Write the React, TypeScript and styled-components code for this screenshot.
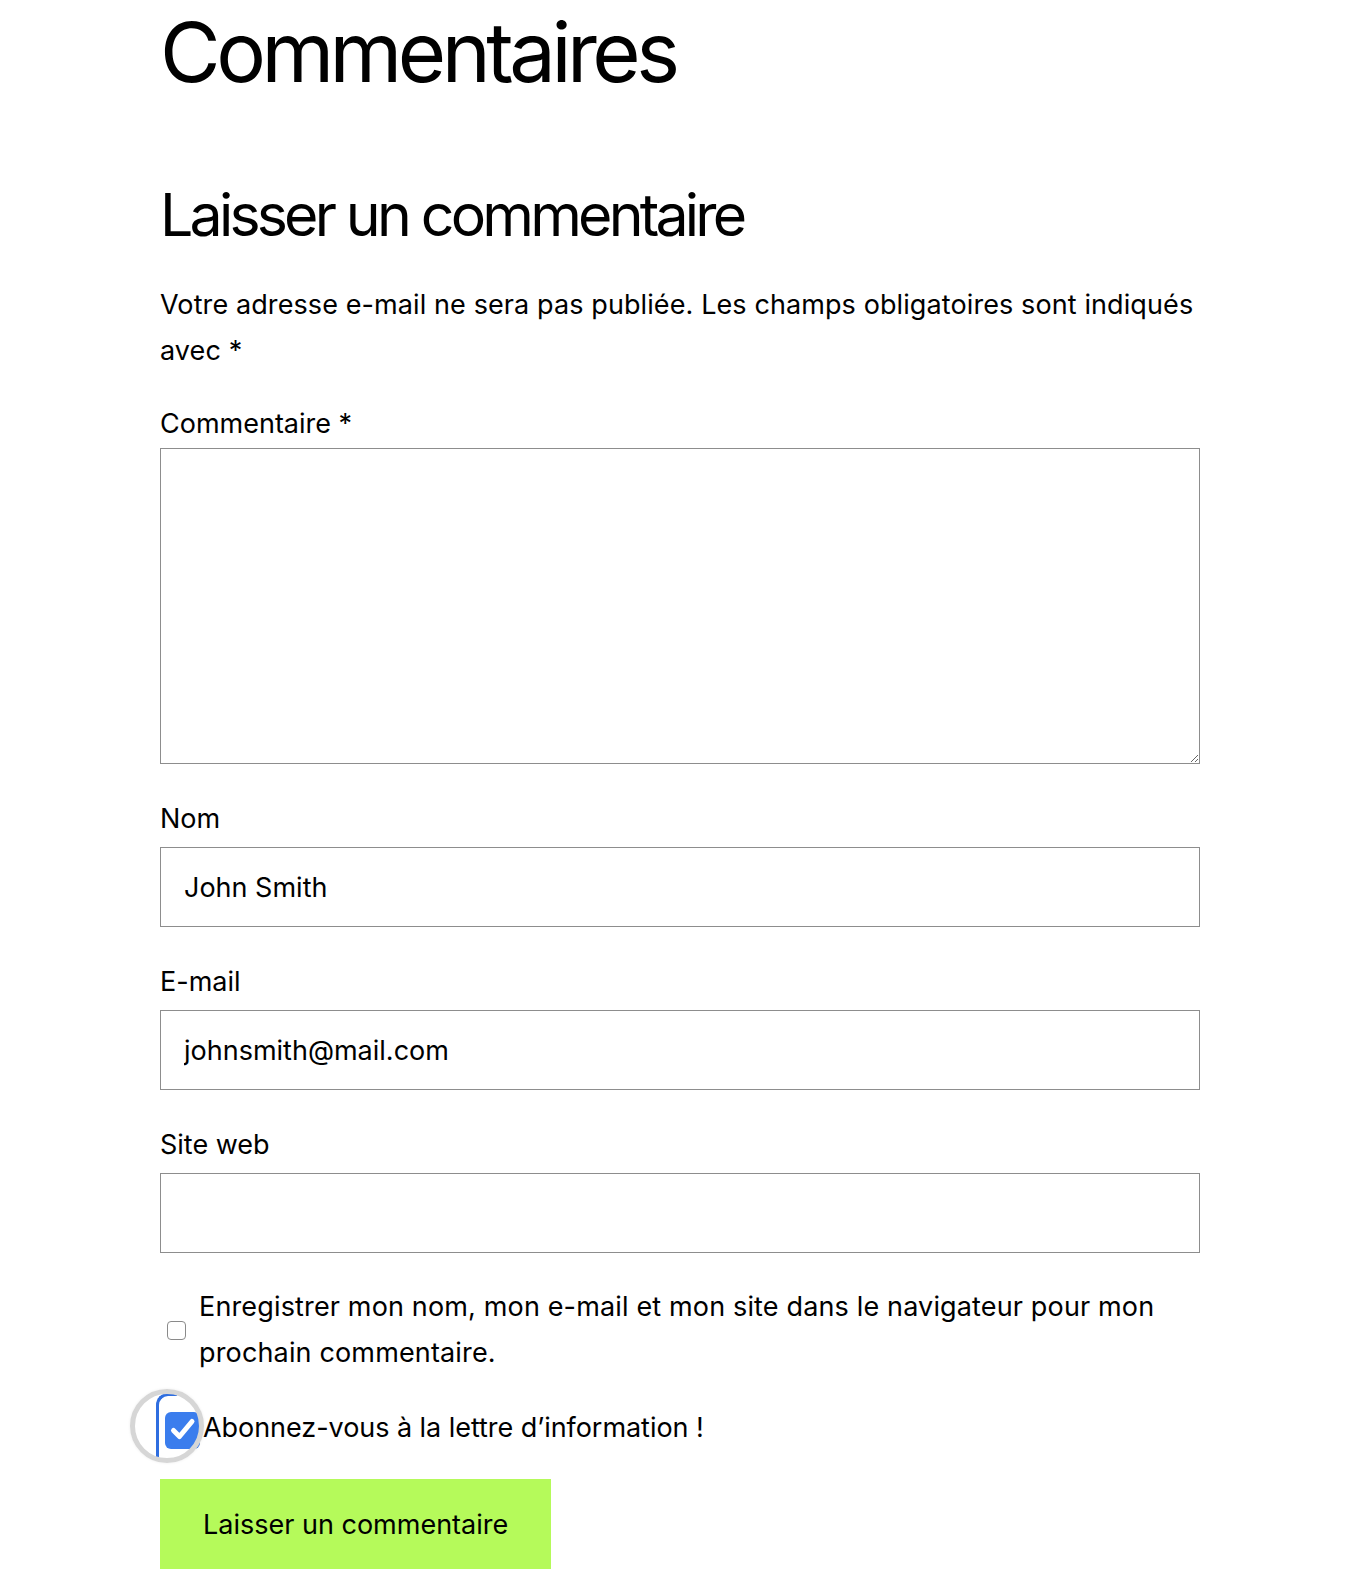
import styled, { createGlobalStyle } from "styled-components";

const GlobalStyle = createGlobalStyle`
  body {
    margin: 0;
    background: #ffffff;
    color: #000000;
    font-family: Inter, "Liberation Sans", Arial, sans-serif;
  }
`;

export default function App() {
  return (
    <>
      <GlobalStyle />
      <CommentsSection>
        <Title>Commentaires</Title>

        <ReplyTitle>Laisser un commentaire</ReplyTitle>
        <Notice>
          Votre adresse e-mail ne sera pas publiée. Les champs obligatoires
          sont indiqués avec *
        </Notice>

        <CommentForm onSubmit={(e) => e.preventDefault()}>
          <Field>
            <FieldLabel htmlFor="comment">Commentaire *</FieldLabel>
            <CommentArea id="comment" />
          </Field>

          <Field>
            <FieldLabel htmlFor="author">Nom</FieldLabel>
            <TextInput id="author" type="text" defaultValue="John Smith" />
          </Field>

          <Field>
            <FieldLabel htmlFor="email">E-mail</FieldLabel>
            <TextInput id="email" type="email" defaultValue="johnsmith@mail.com" />
          </Field>

          <Field>
            <FieldLabel htmlFor="url">Site web</FieldLabel>
            <TextInput id="url" type="url" />
          </Field>

          <CheckRow>
            <PlainCheckbox type="checkbox" />
            <CheckText $spacing="0.15px">
              Enregistrer mon nom, mon e-mail et mon site dans le navigateur
              pour mon prochain commentaire.
            </CheckText>
          </CheckRow>

          <CheckRow $compact>
            <MagnifiedCheck>
              <FocusEdge />
              <BlueBox>
                <svg width="30" height="28" viewBox="0 0 30 28" fill="none">
                  <path
                    d="M5.5 14.5 L11.5 20.5 L24 5.5"
                    stroke="#ffffff"
                    strokeWidth="5"
                    strokeLinecap="round"
                    strokeLinejoin="round"
                  />
                </svg>
              </BlueBox>
              <Lens />
            </MagnifiedCheck>
            <CheckText $spacing="-0.05px">
              Abonnez-vous à la lettre d’information !
            </CheckText>
          </CheckRow>

          <SubmitButton type="submit">Laisser un commentaire</SubmitButton>
        </CommentForm>
      </CommentsSection>
    </>
  );
}

/* ===== styled-components ===== */

const CommentsSection = styled.section`
  width: 1040px;
  margin-left: 160px;
  padding: 9px 0 4px;
`;

const Title = styled.h1`
  margin: 0;
  font-size: 83px;
  line-height: 86px;
  font-weight: 400;
  letter-spacing: -4.5px;
`;

const ReplyTitle = styled.h2`
  margin: 89px 0 0;
  font-size: 59px;
  line-height: 61px;
  font-weight: 400;
  letter-spacing: -3.8px;
`;

const Notice = styled.p`
  margin: 37px 0 0;
  font-size: 27px;
  line-height: 46px;
  letter-spacing: 0.1px;
`;

const CommentForm = styled.form`
  margin-top: 30px;
`;

const Field = styled.div`
  margin-bottom: 35px;
`;

const FieldLabel = styled.label`
  display: block;
  font-size: 27px;
  line-height: 40px;
`;

const CommentArea = styled.textarea`
  display: block;
  box-sizing: border-box;
  width: 100%;
  height: 316px;
  margin-top: 4px;
  padding: 16px 23px;
  border: 1px solid #8d8d8d;
  border-radius: 0;
  font: inherit;
  font-size: 27px;
  outline: none;
`;

const TextInput = styled.input`
  display: block;
  box-sizing: border-box;
  width: 100%;
  height: 80px;
  margin-top: 8px;
  padding: 0 23px;
  border: 1px solid #8d8d8d;
  border-radius: 0;
  font: inherit;
  font-size: 27px;
  color: #000000;
  outline: none;
`;

const CheckRow = styled.div<{ $compact?: boolean }>`
  display: flex;
  align-items: center;
  gap: ${(p) => (p.$compact ? "3px" : "13px")};
  margin: ${(p) => (p.$compact ? "29px 0 0" : "-4px 0 0")};
  padding-left: ${(p) => (p.$compact ? "5px" : "7px")};
  font-size: 27px;
  line-height: 46px;
`;

const CheckText = styled.span<{ $spacing: string }>`
  letter-spacing: ${(p) => p.$spacing};
`;

const PlainCheckbox = styled.input`
  appearance: none;
  flex: none;
  width: 19px;
  height: 19px;
  margin: 0;
  border: 1.5px solid #8a8a8a;
  border-radius: 4px;
  background: #ffffff;
`;

const MagnifiedCheck = styled.span`
  position: relative;
  flex: none;
  width: 35px;
  height: 37px;
  margin-top: 4px;
`;

const BlueBox = styled.span`
  display: flex;
  align-items: center;
  justify-content: center;
  width: 35px;
  height: 37px;
  border-radius: 6px;
  background: #3b7ded;
`;

const FocusEdge = styled.span`
  position: absolute;
  left: -9px;
  top: -19px;
  width: 21px;
  height: 66px;
  border-left: 3.5px solid #2f6ee0;
  border-top: 3px solid #2f6ee0;
  border-top-left-radius: 12px;
  box-sizing: border-box;
`;

const Lens = styled.span`
  position: absolute;
  left: -35px;
  top: -23px;
  width: 74px;
  height: 74px;
  box-sizing: border-box;
  border: 5px solid #d6d6d6;
  border-radius: 50%;
  box-shadow: 0 0 3px rgba(0, 0, 0, 0.08);
  pointer-events: none;
`;

const SubmitButton = styled.button`
  display: block;
  height: 90px;
  margin-top: 28px;
  padding: 0 43px;
  border: none;
  border-radius: 0;
  background: #b5fa5a;
  color: #000000;
  font: inherit;
  font-size: 27px;
  cursor: pointer;
`;
